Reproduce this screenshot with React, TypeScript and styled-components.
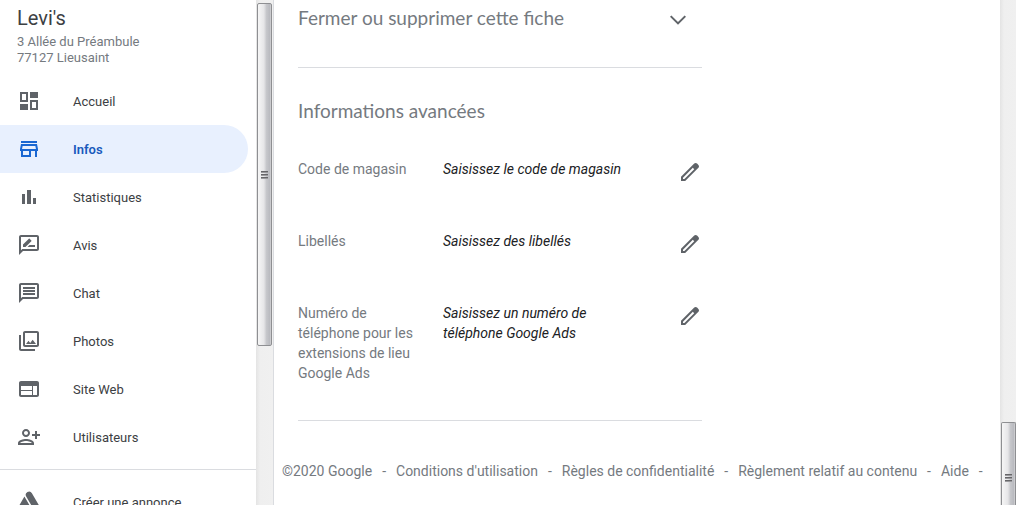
import React from "react";
import styled, { createGlobalStyle, css } from "styled-components";

const GlobalStyle = createGlobalStyle`
  *, *::before, *::after { box-sizing: border-box; }
  body {
    margin: 0;
    background: #fff;
    color: #3c4043;
    font-family: Roboto, "Liberation Sans", sans-serif;
    font-size: 14px;
    line-height: 20px;
  }
  a { color: inherit; text-decoration: none; }
  ul, dl, dd, h1, h2, p { margin: 0; padding: 0; }
  ul { list-style: none; }
`;

const Shell = styled.div`
  display: flex;
  height: 100vh;
  overflow: hidden;
`;

const Sidebar = styled.aside`
  display: flex;
  flex: 0 0 274px;
  border-right: 1px solid #dadce0;
`;

const SidebarBody = styled.div`
  flex: 1;
  min-width: 0;
  overflow: hidden;
`;

const Business = styled.header`
  padding: 6px 17px 11px;
`;

const BusinessName = styled.h1`
  font-size: 20px;
  font-weight: 400;
  line-height: 24px;
  margin-bottom: 4px;
`;

const Address = styled.address`
  color: #757a7f;
  font-size: 13px;
  font-style: normal;
  line-height: 16px;
`;

const NavList = styled.ul<{ $divided?: boolean }>`
  padding-bottom: 8px;
  ${(p) => p.$divided && css`
    padding-top: 8px;
    border-top: 1px solid #dadce0;
  `}
`;

const NavLink = styled.a<{ $active?: boolean }>`
  display: flex;
  align-items: center;
  gap: 32px;
  height: 48px;
  margin-right: 8px;
  padding-left: 17px;
  border-radius: 0 24px 24px 0;
  font-size: 13px;
  font-weight: ${(p) => (p.$active ? 600 : 400)};
  color: ${(p) => (p.$active ? "#185abc" : "#3c4043")};
  background: ${(p) => (p.$active ? "#e8f0fe" : "transparent")};
  svg { color: ${(p) => (p.$active ? "#1967d2" : "#5f6368")}; }
`;

const NavLabel = styled.span`
  padding-top: 2px;
`;

const Glyph = styled.svg`
  display: block;
  flex: none;
  width: 24px;
  height: 24px;
  fill: currentColor;
`;

const Track = styled.div<{ $end?: boolean }>`
  display: flex;
  flex: 0 0 ${(p) => (p.$end ? 16 : 17)}px;
  flex-direction: column;
  justify-content: ${(p) => (p.$end ? "flex-end" : "flex-start")};
  padding: ${(p) => (p.$end ? "0 0 0 1px" : "3px 1px 0")};
  background: linear-gradient(90deg, #e4e4e4, #efefef 4px, #f0f0f0);
`;

const Thumb = styled.div<{ $share: number; $cut?: boolean }>`
  display: flex;
  flex-direction: column;
  align-items: center;
  justify-content: center;
  gap: 1px;
  flex: 0 0 ${(p) => p.$share}%;
  border: 1px solid #8e8f92;
  border-radius: 2px;
  background: linear-gradient(90deg, #f6f6f6, #e6e6e8 45%, #c6c7cb 65%, #b9babf 90%, #d6d6d8);
  ${(p) => p.$cut && css`
    padding-top: 28px;
    border-bottom: 0;
    border-radius: 2px 2px 0 0;
  `}
`;

const Grip = styled.span`
  width: 7px;
  height: 2px;
  background: linear-gradient(#4c4c4e, #b4b4b8);
`;

const Main = styled.main`
  flex: 1;
  min-width: 0;
  overflow: hidden;
`;

const Sheet = styled.div`
  max-width: 428px;
  padding: 0 0 0 24px;
`;

const Section = styled.section`
  padding-bottom: 37px;
  border-bottom: 1px solid #dadce0;
`;

const Heading = styled.h2`
  color: #757a7f;
  font-family: Lato, Roboto, sans-serif;
  font-size: 19px;
  font-weight: 400;
  line-height: 24px;
`;

const Toggle = styled.button`
  display: flex;
  align-items: center;
  justify-content: space-between;
  width: 100%;
  padding: 6px 12px 0 0;
  border: 0;
  background: none;
  color: #5f6368;
  text-align: left;
`;

const Advanced = styled(Section)`
  padding-top: 31px;
`;

const Fields = styled.dl`
  display: flex;
  flex-direction: column;
  gap: 32px;
  margin-top: 36px;
`;

const Field = styled.div`
  display: flex;
  align-items: flex-start;
  min-height: 40px;
`;

const Label = styled.dt`
  flex: 0 0 145px;
  padding-right: 24px;
  color: #757a7f;
`;

const Value = styled.dd`
  flex: 1;
  padding-right: 40px;
  color: #202124;
  font-style: italic;
`;

const EditButton = styled.button`
  margin: 1px 0 0;
  padding: 0;
  border: 0;
  background: none;
  color: #5f6368;
`;

const Footer = styled.footer`
  display: flex;
  gap: 10px;
  padding: 40px 8px;
  color: #757a7f;
  white-space: nowrap;
`;

const ICONS = {
  home: "M3 3h8v10H3zM5 5v6h4V5zM13 3h8v6h-8zM3 15h8v6H3zM13 11h8v10h-8zM15 13v6h4v-6z",
  store: "M18.36 9l.6 3H5.04l.6-3h12.72M20 4H4v2h16V4zm0 3H4l-1 5v2h1v6h10v-6h4v6h2v-6h1v-2l-1-5zM6 18v-4h6v4H6z",
  stats: "M5 9h3v10H5zM10 5h4v14h-4zM16 13h3v6h-3z",
  reviews: "M20 2H4c-1.1 0-1.99.9-1.99 2L2 22l4-4h14c1.1 0 2-.9 2-2V4c0-1.1-.9-2-2-2zm0 14H5.17L4 17.17V4h16v12zM10.5 14H18v-2h-5.5zM14.36 8.13c.2-.2.2-.51 0-.71l-1.77-1.77c-.2-.2-.51-.2-.71 0L6 11.53V14h2.47z",
  chat: "M20 2H4c-1.1 0-1.99.9-1.99 2L2 22l4-4h14c1.1 0 2-.9 2-2V4c0-1.1-.9-2-2-2zm0 14H5.17L4 17.17V4h16v12zM6 12h12v2H6zM6 9h12v2H6zM6 6h12v2H6z",
  photos: "M20 4v12H8V4h12m0-2H8c-1.1 0-2 .9-2 2v12c0 1.1.9 2 2 2h12c1.1 0 2-.9 2-2V4c0-1.1-.9-2-2-2zM11.5 11.67l1.69 2.26 2.48-3.1L19 15H9zM2 6v14c0 1.1.9 2 2 2h14v-2H4V6H2z",
  web: "M20 4H4c-1.1 0-2 .9-2 2v12c0 1.1.9 2 2 2h16c1.1 0 2-.9 2-2V6c0-1.1-.9-2-2-2zm-5 14H4v-4h11v4zm0-5H4V9h11v4zm5 5h-4V9h4v9z",
  users: "M9 12c2.21 0 4-1.79 4-4s-1.79-4-4-4-4 1.79-4 4 1.79 4 4 4zm0-6c1.1 0 2 .9 2 2s-.9 2-2 2-2-.9-2-2 .9-2 2-2zm0 8c-2.67 0-8 1.34-8 4v2h16v-2c0-2.66-5.33-4-8-4zm-6 4c.22-.72 3.31-2 6-2 2.7 0 5.8 1.29 6 2H3zM20 9V6h-2v3h-3v2h3v3h2v-3h3V9z",
  ads: "M9.2 6.4a3.25 3.25 0 0 1 5.7-3.2L22 15.4a3.3 3.3 0 0 1-5.7 3.3zM7.4 6.6l5.2 8.8-2.2 3.6a3.7 3.7 0 0 1-8-3.8z",
  chevron: "M5.4 9.4 4 10.8l8 8 8-8-1.4-1.4L12 16z",
  pencil: "M20.41 4.94l-1.35-1.35c-.78-.78-2.05-.78-2.83 0L3 16.82V21h4.18L20.41 7.77c.79-.78.79-2.05 0-2.83zM6.41 19.06L5 19v-1.36l9.82-9.82 1.41 1.41z",
};

type IconName = keyof typeof ICONS;

const Icon = ({ name }: { name: IconName }) => (
  <Glyph viewBox="0 0 24 24" aria-hidden="true">
    <path fillRule="evenodd" d={ICONS[name]} />
  </Glyph>
);

const NAV: { icon: IconName; label: string }[] = [
  { icon: "home", label: "Accueil" },
  { icon: "store", label: "Infos" },
  { icon: "stats", label: "Statistiques" },
  { icon: "reviews", label: "Avis" },
  { icon: "chat", label: "Chat" },
  { icon: "photos", label: "Photos" },
  { icon: "web", label: "Site Web" },
  { icon: "users", label: "Utilisateurs" },
];

const FIELDS = [
  { label: "Code de magasin", value: "Saisissez le code de magasin" },
  { label: "Libellés", value: "Saisissez des libellés" },
  {
    label: "Numéro de téléphone pour les extensions de lieu Google Ads",
    value: "Saisissez un numéro de téléphone Google Ads",
  },
];

const LINKS = [
  "Conditions d'utilisation",
  "Règles de confidentialité",
  "Règlement relatif au contenu",
  "Aide",
];

const Grips = () => (
  <>
    <Grip />
    <Grip />
    <Grip />
  </>
);

export default function App() {
  return (
    <Shell>
      <GlobalStyle />
      <Sidebar>
        <SidebarBody>
          <Business>
            <BusinessName>Levi's</BusinessName>
            <Address>
              3 Allée du Préambule
              <br />
              77127 Lieusaint
            </Address>
          </Business>
          <nav>
            <NavList>
              {NAV.map(({ icon, label }) => (
                <li key={label}>
                  <NavLink
                    href="#"
                    $active={label === "Infos"}
                    aria-current={label === "Infos" ? "page" : undefined}
                  >
                    <Icon name={icon} />
                    <NavLabel>{label}</NavLabel>
                  </NavLink>
                </li>
              ))}
            </NavList>
            <NavList $divided>
              <li>
                <NavLink href="#">
                  <Icon name="ads" />
                  <NavLabel>Créer une annonce</NavLabel>
                </NavLink>
              </li>
            </NavList>
          </nav>
        </SidebarBody>
        <Track>
          <Thumb $share={68.4}>
            <Grips />
          </Thumb>
        </Track>
      </Sidebar>
      <Main>
        <Sheet>
          <Section>
            <Toggle type="button" aria-expanded="false">
              <Heading as="span">Fermer ou supprimer cette fiche</Heading>
              <Icon name="chevron" />
            </Toggle>
          </Section>
          <Advanced>
            <Heading>Informations avancées</Heading>
            <Fields>
              {FIELDS.map(({ label, value }) => (
                <Field key={label}>
                  <Label>{label}</Label>
                  <Value>{value}</Value>
                  <EditButton type="button" aria-label={`Modifier : ${label}`}>
                    <Icon name="pencil" />
                  </EditButton>
                </Field>
              ))}
            </Fields>
          </Advanced>
        </Sheet>
        <Footer>
          <span>©2020 Google</span>
          {LINKS.map((label) => (
            <React.Fragment key={label}>
              <span>-</span>
              <a href="#">{label}</a>
            </React.Fragment>
          ))}
          <span>-</span>
        </Footer>
      </Main>
      <Track $end>
        <Thumb $share={16.5} $cut>
          <Grips />
        </Thumb>
      </Track>
    </Shell>
  );
}
